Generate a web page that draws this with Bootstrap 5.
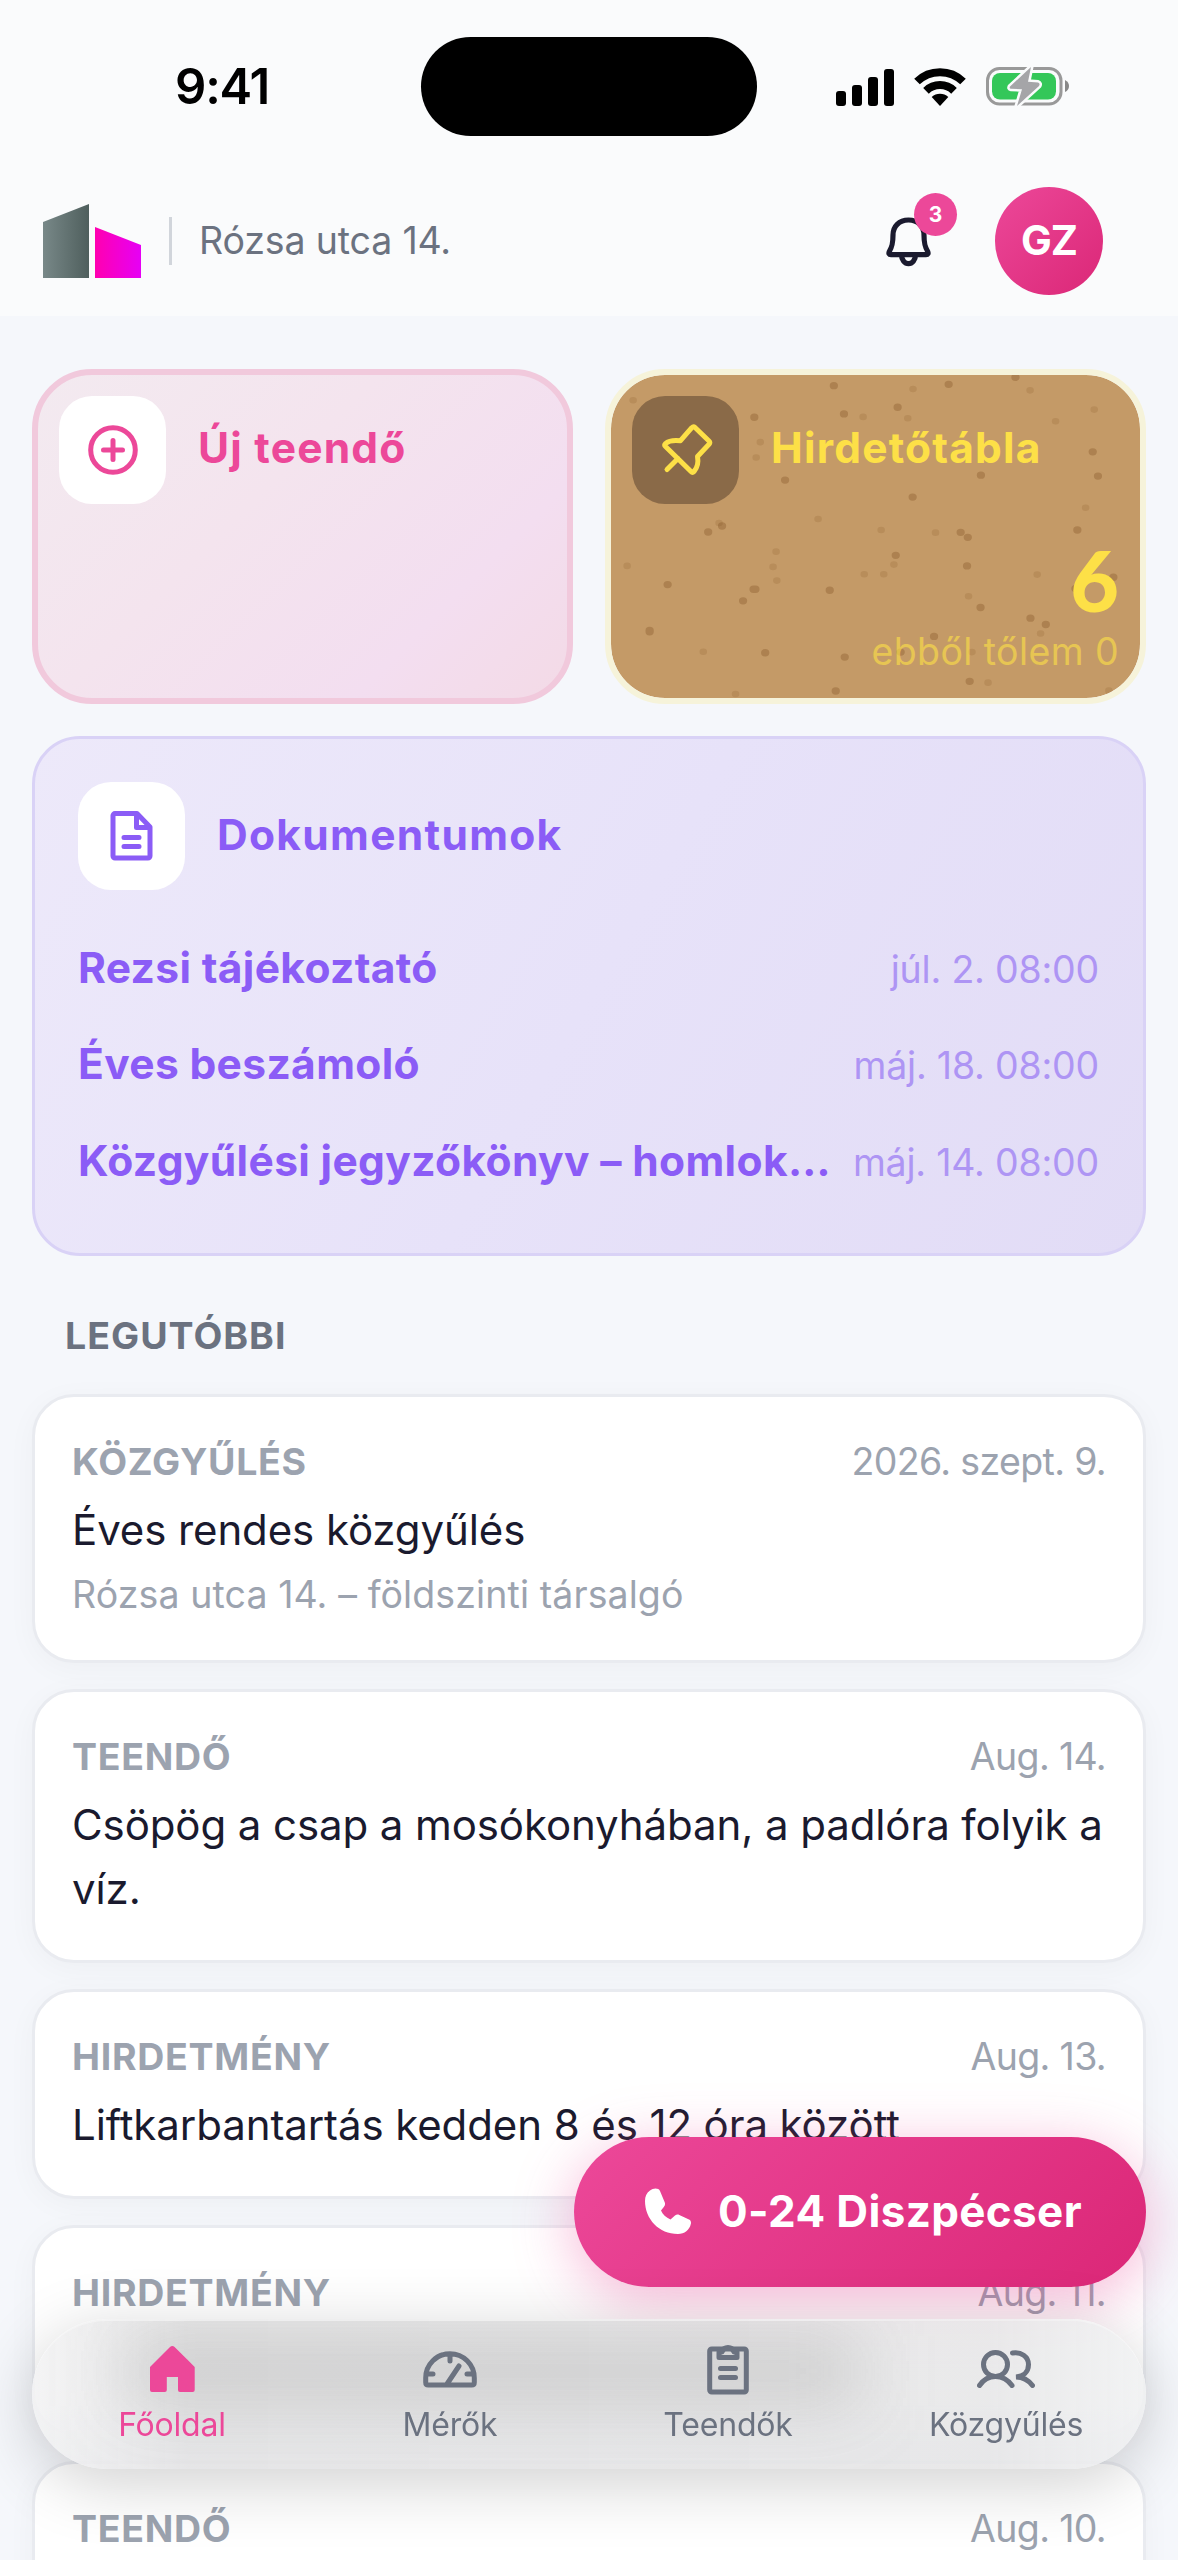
<!DOCTYPE html>
<html lang="hu">
<head>
<meta charset="utf-8">
<meta name="viewport" content="width=device-width, initial-scale=1">
<title>Főoldal</title>
<link href="https://cdn.jsdelivr.net/npm/bootstrap@5.3.0/dist/css/bootstrap.min.css" rel="stylesheet">
<style>
body{width:1178px;height:2560px;overflow:hidden;background:#f5f7fb;font-family:Inter,"Noto Sans",sans-serif;font-size:37.5px;line-height:52px;color:#1a1a2e}
svg{display:block;flex:none}
.app{width:1178px;height:2560px;overflow:hidden}
.topbar{background:#fafbfc;height:316px}
.status{height:166px;padding-top:37px;padding-bottom:30px}
.clock{font-weight:600;font-size:49px;line-height:60px;color:#000;width:421px;padding-left:175px;letter-spacing:-1.2px}
.island{width:336px;height:99px;background:#000}
.sysicons{padding-left:79px;gap:20px}
.brandrow{height:150px;padding-left:43px;padding-right:75px}
.vline{width:3px;height:48px;background:#d1d5db;margin-left:28px;margin-right:27px}
.addr{color:#6b7280;letter-spacing:-.15px}
.bell{margin-right:63px;padding-top:2px}
.count-badge{width:43px;height:43px;left:28px;top:-22px;background:#ec4899;font-size:21px;line-height:43px;font-weight:700}
.avatar{width:108px;height:108px;background:linear-gradient(135deg,#ec4899,#db2777);font-size:41px;font-weight:700;letter-spacing:-1px;padding-bottom:3px}
.content{padding:53px 32px 0}
.tiles{gap:32px}
.tile{height:335px;border-radius:60px;padding:21px}
.tile-new{border:6px solid #f1c9dc;background:linear-gradient(135deg,#f3eaf0,#f4e4ee 40%,#f3def0 75%,#f3dae6);color:#ec4899}
.tile-board{border:6px solid #f6f3da;background:#c49a67 padding-box;color:#fde047}
.speckles{left:0;top:0;width:100%;height:100%;border-radius:54px}
.glyph{width:107px;height:108px;border-radius:33px;background:#fff}
.glyph-dark{background:#8a6a48}
.ttl{font-size:42.5px;line-height:64px;font-weight:700;letter-spacing:.35px}
.tile .ttl{margin-left:32px;padding-bottom:4px;letter-spacing:1.2px}
.tot{font-family:Lato,sans-serif;font-size:84px;line-height:84px;font-weight:900;margin-bottom:5px}
.tot-note{opacity:.62;letter-spacing:.4px;line-height:50px}
.docs{margin-top:32px;height:520px;border:3px solid #d9d2f6;border-radius:48px;padding:43px 44px 43px 43px;background:linear-gradient(120deg,#ede9fa,#e7e2f9 50%,#e2dcf6);color:#8b5cf6}
.docs .head{margin-left:32px;padding-bottom:3px;letter-spacing:1.3px}
.doclist{margin-top:46px;gap:32.3px}
.docdate{color:#ae95f4;letter-spacing:-.2px}
.sec{font-size:37.5px;line-height:52px;font-weight:700;color:#6b7280;letter-spacing:1px;margin:54px 0 32px 33px}
.feed{gap:26px}
.entry{border:3px solid #e9ebf0;border-radius:42px;background:#fff;padding:39px 37px;box-shadow:0 6px 30px rgba(0,0,0,.035)}
.kind{font-weight:700;color:#9ca3af;letter-spacing:.7px}
.when{color:#9ca3af;letter-spacing:-.65px}
.what{font-size:42px;line-height:64px;margin-top:10px;letter-spacing:-.1px}
.where{color:#9ca3af;line-height:56px;margin-top:5px;margin-bottom:-2px;letter-spacing:.1px}
.dispatch{left:574px;top:2137px;width:572px;height:150px;border-radius:75px;background:linear-gradient(135deg,#ec4899,#db2777);box-shadow:0 12px 60px rgba(236,72,153,.4);color:#fff;font-size:44px;font-weight:700;padding-left:71px;gap:27px;letter-spacing:.35px;padding-bottom:2px}
.dock{left:32px;top:2319px;width:1114px;height:150px;border-radius:75px;background:linear-gradient(90deg,rgba(241,241,242,.8),rgba(224,224,225,.76) 14%,rgba(226,226,227,.74) 86%,rgba(238,239,240,.78));backdrop-filter:blur(28px);box-shadow:0 14px 66px rgba(0,0,0,.19);padding:0 1px;color:#6b7280;border-top:2px solid rgba(255,255,255,.28)}
.dock-shade{inset:0;border-radius:75px}
.dock-shade::before{content:"";position:absolute;left:90px;top:14px;width:740px;height:72px;background:rgba(120,120,120,.24);filter:blur(34px)}
.dock-item{width:278px;font-size:32px;line-height:40px;letter-spacing:-.2px;color:#6b7280;text-decoration:none}
.dock-item.on{color:#ec4899}
.dock-ic{height:52px;margin-top:22px;margin-bottom:10px}
</style>
<script src="https://cdn.jsdelivr.net/npm/bootstrap@5.3.0/dist/js/bootstrap.bundle.min.js"></script>
</head>
<body>
<div class="app position-relative">
<header class="topbar">
  <div class="status d-flex align-items-center">
    <div class="clock">9:41</div>
    <div class="island rounded-pill"></div>
    <div class="sysicons d-flex align-items-center">
      <svg width="58" height="38" viewBox="0 0 58 38"><rect x="0" y="23" width="10" height="15" rx="3"/><rect x="16" y="17" width="10" height="21" rx="3"/><rect x="32" y="9" width="10" height="29" rx="3"/><rect x="48" y="1" width="10" height="37" rx="3"/></svg>
      <svg width="52" height="38" viewBox="0 0 52 38"><g fill="none" stroke="#000" stroke-width="8"><path d="M3 13.5A33 33 0 0 1 49 13.5"/><path d="M12 22.8A20 20 0 0 1 40 22.8"/></g><path d="M17.7 29a12.5 12.5 0 0 1 16.6 0L26 38z"/></svg>
      <svg width="84" height="39" viewBox="0 0 84 39"><rect x="1.5" y="1.5" width="73.5" height="35.5" rx="12" fill="none" stroke="#999" stroke-width="3"/><rect x="6" y="6" width="64" height="26.500" rx="8" fill="#34c759"/><path d="M45 0 24 19.500q-1 2 1 2.300l11 .4L31 39 53 19q1.500-2.500-1-3.500l-10-.8z" fill="#a5a5a8" stroke="#fafbfc" stroke-width="5" paint-order="stroke" stroke-linejoin="round"/><path d="M79 13q4 2 4 6t-4 6z" fill="#888"/></svg>
    </div>
  </div>
  <div class="brandrow d-flex align-items-center">
    <svg width="98" height="74" viewBox="0 0 98 74"><defs><linearGradient id="lg"><stop stop-color="#788888"/><stop offset="1" stop-color="#4f5f5d"/></linearGradient><linearGradient id="lp"><stop stop-color="#ff00b0"/><stop offset="1" stop-color="#e600f5"/></linearGradient></defs><path fill="url(#lg)" d="M0 18 46 0V74H0z"/><path fill="url(#lp)" d="M52 23 98 41V74H52z"/></svg>
    <div class="vline"></div>
    <div class="addr">Rózsa utca 14.</div>
    <div class="bell position-relative ms-auto">
      <svg width="46" height="50" viewBox="0 0 46 50" fill="none" stroke="#1a1a2e" stroke-width="5.200" stroke-linejoin="round"><path d="M22.500 3C13 3 7 9.500 7 18c0 9-1 12-3.700 16.500Q2 37.700 5 37.700h35q3 0 1.700-3.200C39 30 38 27 38 18 38 9.500 32 3 22.500 3z"/><path d="M15.500 38a7 8.700 0 0 0 14 0"/></svg>
      <span class="count-badge position-absolute rounded-circle text-white text-center">3</span>
    </div>
    <div class="avatar rounded-circle text-white d-flex align-items-center justify-content-center">GZ</div>
  </div>
</header>

<main class="content">
  <div class="tiles d-flex">
    <section class="tile tile-new flex-fill w-50">
      <div class="d-flex align-items-center">
        <div class="glyph d-flex align-items-center justify-content-center"><svg width="50" height="50" viewBox="0 0 50 50" fill="none" stroke="#ec4899" stroke-width="5" stroke-linecap="round"><circle cx="25" cy="25" r="22.300"/><path d="M25 15.500v19M15.500 25h19"/></svg></div>
        <div class="ttl">Új teendő</div>
      </div>
    </section>
    <section class="tile tile-board flex-fill w-50 position-relative d-flex flex-column">
      <svg class="speckles position-absolute" viewBox="58 105 1410 971" preserveAspectRatio="none" fill="none" stroke-linecap="round" stroke="#7b4f1e"><path stroke-width="22" opacity=".32" d="M652 137h0M958 133h0M1136 112h0M822 202h0M679 222h0M440 232h0M1342 336h0M1356 409h0M1044 406h0M522 421h0M862 472h0M354 559h0M317 577h0M1301 571h0M990 578h0M1009 593h0M817 647h0M1007 679h0M209 735h0M438 749h5M410 784h0M641 752h0M1043 804h0M1176 836h0M1217 855h0M161 873v4M919 891h0M469 940h0M681 953h0M830 938h0M1014 1026h0M657 1055h0M1397 713h0M1296 747h0"/><path stroke-width="20" opacity=".17" d="M863 147h0M1175 151h0M117 181h0M1346 209h0M849 235h0M730 231h0M1243 244h0M456 307h0M445 353h0M1323 504h0M610 538h0M346 550h0M778 571h0M923 579h0M498 636h0M490 682h0M812 675h0M785 704h0M733 704h0M500 723h0M1194 705h0M1011 770h0M101 679h0M1203 882h0M304 937h0M1020 938h0M1063 1030h0M390 1064h0M1385 1054h0"/></svg>
      <div class="d-flex align-items-center position-relative">
        <div class="glyph glyph-dark"><svg width="107" height="107" viewBox="0 0 107 107" fill="none" stroke="#fde047" stroke-width="5" stroke-linecap="round" stroke-linejoin="round"><path d="M63 31.500 77 45q1.500 1.500 0 3.300L65.500 60.500c1 5.500 0 11-3.500 15q-1.500 1.500-3 0L33.500 50.500q-1.500-1.500 0-3 4.500-4 15-2.800L59.800 31.700q1.600-1.500 3.200-.2zM46 62.500 35 73.500"/></svg></div>
        <div class="ttl">Hirdetőtábla</div>
      </div>
      <div class="mt-auto text-end position-relative">
        <div class="tot">6</div>
        <div class="tot-note">ebből tőlem 0</div>
      </div>
    </section>
  </div>

  <section class="docs">
    <div class="d-flex align-items-center">
      <div class="glyph d-flex align-items-center justify-content-center"><svg width="43" height="50" viewBox="0 0 43 50" fill="none" stroke="#8b5cf6" stroke-width="5" stroke-linecap="round" stroke-linejoin="round"><path d="M5 2.600h22L40 16v29a2 2 0 0 1-2 2H5a2 2 0 0 1-2-2V4.600a2 2 0 0 1 2-2zM26.500 3v13.500H40M14 26.500h15M14 35.500h15"/></svg></div>
      <div class="ttl head">Dokumentumok</div>
    </div>
    <div class="doclist d-flex flex-column">
      <div class="d-flex justify-content-between align-items-baseline"><span class="ttl">Rezsi tájékoztató</span><span class="docdate">júl. 2. 08:00</span></div>
      <div class="d-flex justify-content-between align-items-baseline"><span class="ttl">Éves beszámoló</span><span class="docdate">máj. 18. 08:00</span></div>
      <div class="d-flex justify-content-between align-items-baseline"><span class="ttl text-nowrap">Közgyűlési jegyzőkönyv – homlok…</span><span class="docdate text-nowrap">máj. 14. 08:00</span></div>
    </div>
  </section>

  <h2 class="sec">LEGUTÓBBI</h2>

  <div class="feed d-flex flex-column">
    <article class="entry">
      <div class="d-flex justify-content-between"><span class="kind">KÖZGYŰLÉS</span><span class="when">2026. szept. 9.</span></div>
      <div class="what">Éves rendes közgyűlés</div>
      <div class="where">Rózsa utca 14. – földszinti társalgó</div>
    </article>
    <article class="entry">
      <div class="d-flex justify-content-between"><span class="kind">TEENDŐ</span><span class="when">Aug. 14.</span></div>
      <div class="what"><span class="text-nowrap">Csöpög a csap a mosókonyhában, a padlóra folyik a</span><br>víz.</div>
    </article>
    <article class="entry">
      <div class="d-flex justify-content-between"><span class="kind">HIRDETMÉNY</span><span class="when">Aug. 13.</span></div>
      <div class="what">Liftkarbantartás kedden 8 és 12 óra között</div>
    </article>
    <article class="entry">
      <div class="d-flex justify-content-between"><span class="kind">HIRDETMÉNY</span><span class="when">Aug. 11.</span></div>
      <div class="what">&nbsp;</div>
    </article>
    <article class="entry">
      <div class="d-flex justify-content-between"><span class="kind">TEENDŐ</span><span class="when">Aug. 10.</span></div>
      <div class="what">&nbsp;</div>
    </article>
  </div>
</main>

<a class="dispatch position-absolute d-flex align-items-center text-decoration-none" href="#">
  <svg width="46" height="46" viewBox="0 0 46 46" fill="#fff"><path d="M5 2.500C8 0 13.500-.5 15 3l4.800 11.500c.6 1.700.2 3.200-1 4.600L16 22.500c1.500 4 5 7 9.500 9l4.500-4c1.300-1 2.800-1.300 4.300-.6L44 31.500c1.800.9 2.300 2.600 1.800 4.500C44.500 42 39.500 46 33 46 14 46 0 31 0 13 0 8.500 1.500 5 5 2.500Z"/></svg>
  <span>0-24 Diszpécser</span>
</a>

<nav class="dock position-absolute d-flex">
  <div class="dock-shade position-absolute overflow-hidden"></div>
  <a class="dock-item on position-relative d-flex flex-column align-items-center" href="#"><span class="dock-ic d-flex align-items-center"><svg width="45" height="46" viewBox="0 0 45 46" fill="currentColor"><path d="M0 21 20 1q2.300-2 4.600 0L44.700 21v23q0 2-2 2H30q-2 0-2-2V31H16.800v13q0 2-2 2H2q-2 0-2-2z"/></svg></span><span>Főoldal</span></a>
  <a class="dock-item position-relative d-flex flex-column align-items-center" href="#"><span class="dock-ic d-flex align-items-center"><svg width="54" height="37" viewBox="0 0 54 37" fill="none" stroke="currentColor" stroke-width="5" stroke-linecap="round"><path d="M2.700 31.500V27a24.300 24.300 0 0 1 48.600 0v4.500q0 2.500-2.500 2.500H5.200q-2.500 0-2.500-2.500zM27 3v7M4 23h6M50 23h-6M36 15 24 33"/></svg></span><span>Mérők</span></a>
  <a class="dock-item position-relative d-flex flex-column align-items-center" href="#"><span class="dock-ic d-flex align-items-center"><svg width="42" height="52" viewBox="0 0 42 52" fill="none" stroke="currentColor" stroke-width="5" stroke-linecap="round" stroke-linejoin="round"><rect x="2.700" y="6" width="36.600" height="43" rx="2"/><path d="M12 14.500V9h3a6.300 6.300 0 0 1 12 0h3v5.500zM13.500 25.500h15M13.500 34.500h15"/></svg></span><span>Teendők</span></a>
  <a class="dock-item position-relative d-flex flex-column align-items-center" href="#"><span class="dock-ic d-flex align-items-center"><svg width="58" height="38" viewBox="0 0 58 38" fill="none" stroke="currentColor" stroke-width="5" stroke-linecap="round"><circle cx="18.500" cy="14.500" r="12"/><path d="M2.500 35.500q6-9 16-9t16.500 9M35.500 3c8.500-1.500 16 3.500 16 11.500S45.500 26.500 39 27q10 0 16.500 8.500"/></svg></span><span>Közgyűlés</span></a>
</nav>
</div>
</body>
</html>
